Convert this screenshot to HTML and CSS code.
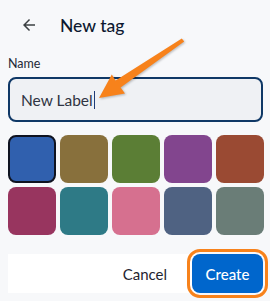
FILE: index.html
```html
<!DOCTYPE html>
<html lang="en">
<head>
    <meta charset="UTF-8">
    <meta name="viewport" content="width=device-width, initial-scale=1.0">
    <title>New tag</title>
    <link rel="stylesheet" href="styles.css">
</head>
<body>
    <div class="header">
        <button class="back-btn" aria-label="Back">
            <svg width="18" height="18" viewBox="0 0 24 24"><path d="M20 11H7.83l5.59-5.59L12 4l-8 8 8 8 1.41-1.41L7.83 13H20v-2z" fill="#3c4043"/></svg>
        </button>
        <h1>New tag</h1>
    </div>

    <label class="field-label" for="tag-name">Name</label>
    <div class="name-input">
        <span id="tag-name">New Label</span><span class="caret"></span>
    </div>

    <div class="swatches">
        <div class="swatch selected" style="background:#3060ae"></div>
        <div class="swatch" style="background:#88703c"></div>
        <div class="swatch" style="background:#5b7e35"></div>
        <div class="swatch" style="background:#82458e"></div>
        <div class="swatch" style="background:#9a4a33"></div>
        <div class="swatch" style="background:#98355f"></div>
        <div class="swatch" style="background:#2e7a86"></div>
        <div class="swatch" style="background:#d6708f"></div>
        <div class="swatch" style="background:#4f6282"></div>
        <div class="swatch" style="background:#6a7d77"></div>
    </div>

    <div class="footer">
        <button class="cancel-btn">Cancel</button>
        <button class="create-btn">Create</button>
    </div>

    <!-- annotation arrow -->
    <svg class="pointer" width="270" height="301" viewBox="0 0 270 301">
        <polygon points="99,98 125,93.5 120.6,87.6 184.2,41.6 181.8,38.4 115.6,80.4 111.8,74.6" fill="#f7821b"/>
    </svg>
</body>
</html>
```

FILE: styles.css
```css
body {
    margin: 0;
    width: 270px;
    height: 301px;
    background-color: #f7f8fa;
    font-family: Lato, "Open Sans", sans-serif;
    color: #111827;
    position: relative;
    overflow: hidden;
}

.header {
    display: flex;
    align-items: center;
    height: 50px;
    padding-left: 20px;
}

.back-btn {
    background: none;
    border: none;
    padding: 0;
    width: 18px;
    height: 18px;
    display: flex;
}

.header h1 {
    margin: 0 0 0 22px;
    font-size: 17.5px;
    font-weight: 500;
    color: #0d1830;
}

.field-label {
    display: block;
    margin: 6px 8px 0;
    font-size: 12.5px;
    line-height: 16px;
    color: #1f2937;
}

.name-input {
    margin: 5px 7px 0 8px;
    height: 41px;
    border: 2px solid #0f3866;
    border-radius: 8px;
    background-color: #eff1f4;
    display: flex;
    align-items: center;
    padding-left: 11px;
    font-size: 15.5px;
    color: #2f3442;
}

.caret {
    width: 1px;
    height: 18px;
    background-color: #1f3c77;
    margin-left: 1px;
}

.swatches {
    display: grid;
    grid-template-columns: repeat(5, 48px);
    grid-auto-rows: 48px;
    gap: 4px;
    margin: 13px 0 0 8px;
}

.swatch {
    border-radius: 8px;
    box-sizing: border-box;
}

.swatch.selected {
    border: 2px solid #0f1320;
}

.footer {
    display: flex;
    justify-content: flex-end;
    margin: 19px 7px 0 8px;
    background-color: #fff;
    height: 39px;
}

.footer button {
    font-family: inherit;
    font-size: 15px;
    border: none;
    cursor: pointer;
}

.cancel-btn {
    background: none;
    color: #1f2430;
    padding: 0 21px;
}

.create-btn {
    width: 71px;
    margin-left: 4px;
    background-color: #0066cc;
    color: #fff;
    border-radius: 8px;
    font-weight: 500;
    outline: 3px solid #f7821b;
    outline-offset: 2px;
}

.pointer {
    position: absolute;
    left: 0;
    top: 0;
    pointer-events: none;
    filter: drop-shadow(1px 1px 1px rgba(0, 0, 0, 0.25));
}
```
